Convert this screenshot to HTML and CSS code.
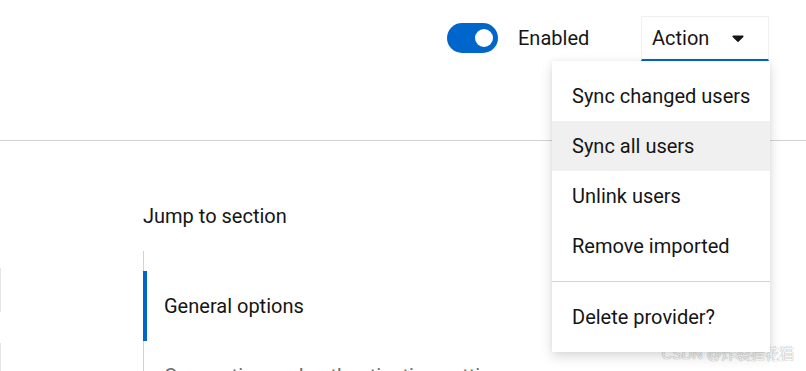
FILE: index.html
```html
<!DOCTYPE html>
<html>
    <head>
        <link rel="stylesheet" href="styles.css">
    </head>
    <body>
        <div class="page">
            <div class="header">
                <div class="toolbar">
                    <label class="switch">
                        <span class="switch-toggle"></span>
                        <span class="switch-label">Enabled</span>
                    </label>
                    <div class="dropdown">
                        <button class="dropdown-toggle">
                            <span>Action</span>
                            <svg class="caret" viewBox="0 0 320 512" width="12" height="20">
                                <path d="M31.3 192h257.3c17.8 0 26.7 21.5 14.1 34.1L174.1 354.8c-7.8 7.8-20.5 7.8-28.3 0L17.2 226.1C4.6 213.5 13.5 192 31.3 192z"></path>
                            </svg>
                        </button>
                        <ul class="dropdown-menu">
                            <li class="menu-item">Sync changed users</li>
                            <li class="menu-item hover">Sync all users</li>
                            <li class="menu-item">Unlink users</li>
                            <li class="menu-item">Remove imported</li>
                            <li class="menu-divider"></li>
                            <li class="menu-item">Delete provider?</li>
                        </ul>
                    </div>
                </div>
            </div>

            <div class="content">
                <div class="edge-lines">
                    <span class="edge edge-a"></span>
                    <span class="edge edge-b"></span>
                </div>
                <div class="jump">
                    <h3 class="jump-title">Jump to section</h3>
                    <ul class="jump-list">
                        <li class="jump-item active">General options</li>
                        <li class="jump-item">Connection and authentication settings</li>
                    </ul>
                </div>
            </div>

            <div class="watermark">CSDN @炸裂狸花猫</div>
        </div>
    </body>
</html>
```

FILE: styles.css
```css
* {
    margin: 0;
    padding: 0;
    box-sizing: border-box;
}

body {
    font-family: Roboto, 'Noto Sans', sans-serif;
    font-size: 20px;
    color: #151515;
    background: #fff;
    overflow: hidden;
}

.page {
    position: relative;
    width: 806px;
    height: 371px;
    overflow: hidden;
}

.header {
    height: 141px;
    border-bottom: 1px solid #d2d2d2;
}

.toolbar {
    display: flex;
    justify-content: flex-end;
    align-items: flex-start;
    padding: 16px 37px 0 0;
}

.switch {
    display: flex;
    align-items: center;
    height: 44px;
    width: 144px;
    margin-right: 50px;
}

.switch-toggle {
    position: relative;
    width: 51px;
    height: 30px;
    border-radius: 15px;
    background: #06c;
}

.switch-toggle:after {
    content: '';
    position: absolute;
    top: 6px;
    right: 5px;
    width: 18px;
    height: 18px;
    border-radius: 50%;
    background: #fff;
}

.switch-label {
    margin-left: 20px;
}

.dropdown {
    position: relative;
}

.dropdown-toggle {
    display: flex;
    align-items: center;
    justify-content: space-between;
    width: 128px;
    height: 45px;
    padding: 0 24px 0 10px;
    font: inherit;
    color: #151515;
    background: #fff;
    border: 1px solid #f0f0f0;
    border-bottom: 2px solid #06c;
}

.caret {
    fill: #151515;
}

.dropdown-menu {
    position: absolute;
    top: 45px;
    right: -1px;
    width: 218px;
    padding: 10px 0;
    list-style: none;
    background: #fff;
    box-shadow: 0 5px 12px rgba(3, 3, 3, 0.14), 0 0 5px rgba(3, 3, 3, 0.06);
    z-index: 2;
}

.menu-item {
    height: 50px;
    line-height: 50px;
    padding-left: 20px;
    white-space: nowrap;
}

.menu-item.hover {
    background: #f0f0f0;
}

.menu-divider {
    height: 1px;
    margin: 10px 0;
    background: #d2d2d2;
}

.content {
    display: flex;
}

.edge-lines {
    display: flex;
    flex-direction: column;
    width: 143px;
    padding-top: 127px;
}

.edge {
    display: block;
    width: 1px;
    background: #e4e4e4;
}

.edge-a {
    height: 44px;
    margin-bottom: 31px;
}

.edge-b {
    height: 40px;
}

.jump {
    padding-top: 60px;
}

.jump-title {
    font-size: 20px;
    font-weight: 400;
    line-height: 30px;
    margin-bottom: 20px;
}

.jump-list {
    list-style: none;
    border-left: 1px solid #d2d2d2;
    padding-top: 20px;
}

.jump-item {
    position: relative;
    height: 70px;
    line-height: 70px;
    padding-left: 20px;
    white-space: nowrap;
    color: #6a6e73;
}

.jump-item.active {
    color: #151515;
}

.jump-item.active:before {
    content: '';
    position: absolute;
    top: 0;
    left: -1px;
    width: 4px;
    height: 100%;
    background: #06c;
}

.watermark {
    position: absolute;
    right: 12px;
    bottom: 8px;
    font-family: 'Liberation Sans', 'Noto Sans CJK SC', sans-serif;
    font-size: 14.5px;
    color: #fafafa;
    text-shadow: 0 0 1px #b0b0b0, 0 0 1px #b0b0b0;
}
```
